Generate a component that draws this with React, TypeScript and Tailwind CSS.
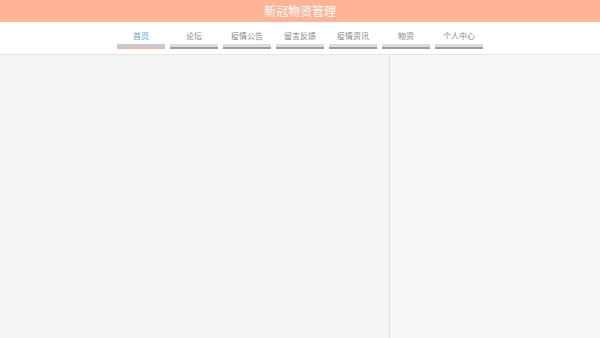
import React from "react";

const items = ["首页", "论坛", "疫情公告", "留言反馈", "疫情资讯", "物资", "个人中心"];

export default function App() {
  return (
    <div className="w-[600px] h-[338px] flex flex-col bg-white overflow-hidden" style={{ fontFamily: '"Noto Sans CJK SC", "Noto Sans", sans-serif' }}>
      <div className="h-[22px] bg-[#ffb496] flex items-center justify-center text-white text-[12px] leading-none">
        新冠物资管理
      </div>
      <div className="h-[33px] flex justify-center gap-[5px] pt-[8px] border-b border-[#e6e6e6]">
        {items.map((t, i) => (
          <div key={t} className="w-[48px] flex flex-col items-center">
            <div className={`text-[8px] leading-[12px] h-[14px] ${i === 0 ? "text-[#5aa7d6]" : "text-[#888]"}`}>{t}</div>
            <div className={`w-[48px] h-[3px] ${i === 0 ? "bg-[#bccfe0]" : "bg-[#dddddd]"}`} />
            <div className={`w-[48px] h-[2px] ${i === 0 ? "bg-[#ffb496]" : "bg-[#9e9e9e]"}`} />
          </div>
        ))}
      </div>
      <div className="flex-1 flex">
        <div className="w-[390px] bg-[#f4f4f4] border-r border-[#dcdcdc]" />
        <div className="flex-1 bg-[#f7f7f7]" />
      </div>
    </div>
  );
}
